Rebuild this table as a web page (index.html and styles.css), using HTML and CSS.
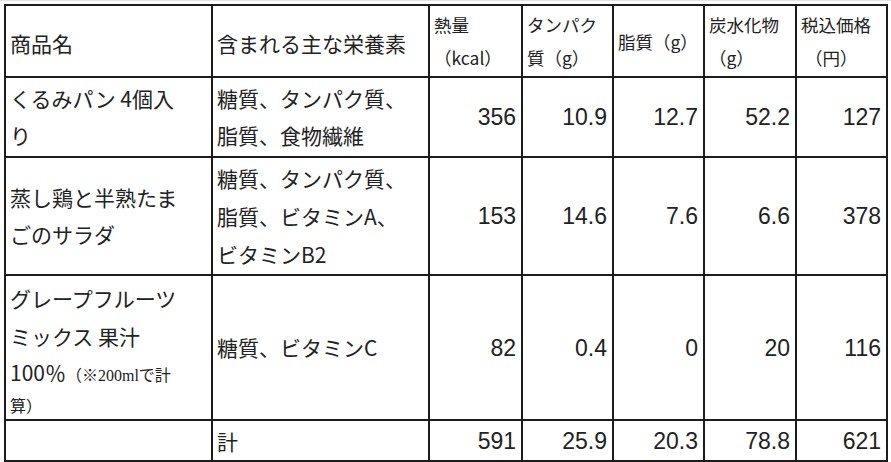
FILE: index.html
```html
<!DOCTYPE html>
<html lang="ja">
<head>
<meta charset="utf-8">
<title>栄養表</title>
<link rel="stylesheet" href="styles.css">
</head>
<body>
<div class="sheet">
<table class="nutri">
  <colgroup>
    <col class="c-name">
    <col class="c-nut">
    <col class="c-kcal">
    <col class="c-pro">
    <col class="c-fat">
    <col class="c-carb">
    <col class="c-price">
  </colgroup>
  <tr class="r-head">
    <td class="txt big">商品名</td>
    <td class="txt big">含まれる主な栄養素</td>
    <td class="txt hd">熱量<br>（kcal）</td>
    <td class="txt hd">タンパク<br>質（g）</td>
    <td class="txt hd">脂質（g）</td>
    <td class="txt hd">炭水化物<br>（g）</td>
    <td class="txt hd">税込価格<br><span class="ind">（円）</span></td>
  </tr>
  <tr class="r-1">
    <td class="txt">くるみパン 4個入<br>り</td>
    <td class="txt">糖質、タンパク質、<br>脂質、食物繊維</td>
    <td class="num">356</td>
    <td class="num">10.9</td>
    <td class="num">12.7</td>
    <td class="num">52.2</td>
    <td class="num">127</td>
  </tr>
  <tr class="r-2">
    <td class="txt">蒸し鶏と半熟たま<br>ごのサラダ</td>
    <td class="txt tall">糖質、タンパク質、<br>脂質、ビタミンA、<br>ビタミンB2</td>
    <td class="num">153</td>
    <td class="num">14.6</td>
    <td class="num">7.6</td>
    <td class="num">6.6</td>
    <td class="num">378</td>
  </tr>
  <tr class="r-3">
    <td class="txt">
      <span class="ln l1">グレープフルーツ</span>
      <span class="ln l2">ミックス 果汁</span>
      <span class="ln l3">100％<span class="note">（※200mlで計</span></span>
      <span class="ln sm"><span class="note">算）</span></span>
    </td>
    <td class="txt">糖質、ビタミンC</td>
    <td class="num">82</td>
    <td class="num">0.4</td>
    <td class="num">0</td>
    <td class="num">20</td>
    <td class="num">116</td>
  </tr>
  <tr class="r-total">
    <td class="txt"></td>
    <td class="txt">計</td>
    <td class="num">591</td>
    <td class="num">25.9</td>
    <td class="num">20.3</td>
    <td class="num">78.8</td>
    <td class="num">621</td>
  </tr>
</table>
</div>
</body>
</html>
```

FILE: styles.css
```css
html, body {
  margin: 0;
  padding: 0;
  background: #ffffff;
}

.sheet {
  padding: 3px 0 0 4px;
  border-top: 1px solid #e2e2e2;
}

.nutri {
  border-collapse: collapse;
  table-layout: fixed;
  width: 884px;
  color: #222222;
  font-family: "Noto Sans CJK JP", "Noto Sans", sans-serif;
}

.c-name { width: 207px; }
.c-nut { width: 217px; }
.c-kcal { width: 93px; }
.c-pro { width: 91px; }
.c-fat { width: 91px; }
.c-carb { width: 92px; }
.c-price { width: 91px; }

.nutri td {
  border: 2px solid #1c1c1c;
  padding: 0 5px 0 4px;
  vertical-align: middle;
  overflow: hidden;
  white-space: nowrap;
}

.r-head { height: 72px; }
.r-1 { height: 80px; }
.r-2 { height: 118px; }
.r-3 { height: 145px; }
.r-total { height: 41px; }

.txt {
  text-align: left;
  font-size: 21px;
  line-height: 37px;
}

.r-total .txt {
  line-height: 30px;
}

.txt.big {
  padding-top: 4px;
}

.txt.tall {
  line-height: 38px;
}

.txt.hd {
  font-size: 17.5px;
  line-height: 33px;
}

.ind {
  padding-left: 4px;
}

.num {
  text-align: right;
  font-family: "Liberation Sans", Arial, sans-serif;
  font-size: 23px;
  line-height: 30px;
}

.ln {
  display: block;
  height: 37px;
  line-height: 37px;
}

.ln.l1 { height: 39px; line-height: 39px; }
.ln.l3 { height: 35px; line-height: 35px; }

.ln.sm {
  height: 26px;
  line-height: 26px;
}

.note {
  font-family: "Liberation Serif", "Noto Sans CJK JP", serif;
  font-size: 16px;
  line-height: 16px;
}
```
